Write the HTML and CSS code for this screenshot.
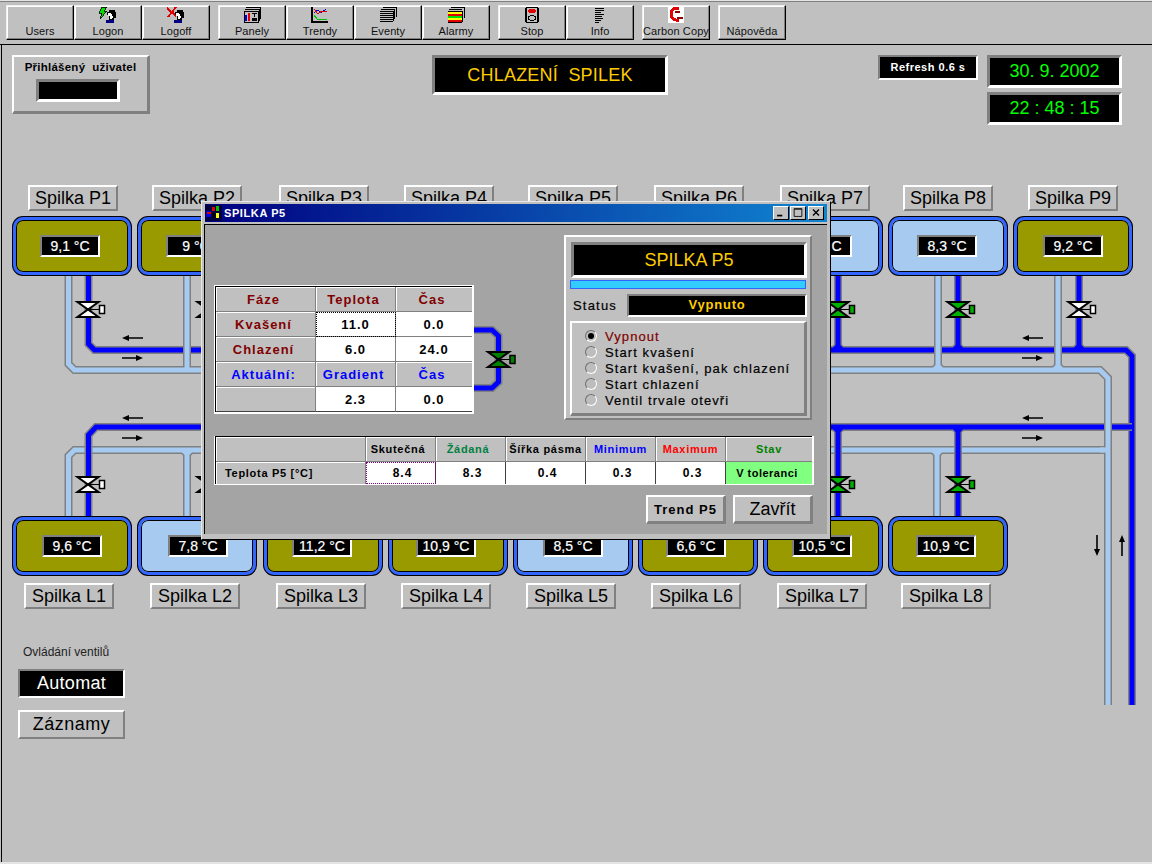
FILE: index.html
```html
<!DOCTYPE html>
<html lang="cs">
<head>
<meta charset="utf-8">
<title>Chlazení spilek</title>
<link rel="stylesheet" href="styles.css">
</head>
<body>
<div class="app">
  <header class="toolbar">
    <div class="tool-group">
      <button class="tool"><span class="tool-icon"></span><span>Users</span></button>
      <button class="tool"><svg class="tool-icon" viewBox="0 0 18 16"><path d="M3 0h5L5 4h3L1 12l2-6H0z" fill="#00e000" stroke="#000" stroke-width=".8"/><path d="M8 5h2V3h6v2h1v6h-2v2H10V8H8z" fill="#000"/><path d="M9 6h3v1h1v2h1v2h-1v1h-2V9H9z" fill="#fff"/><rect x="7" y="13" width="8" height="3" fill="#000080"/></svg><span>Logon</span></button>
      <button class="tool"><svg class="tool-icon" viewBox="0 0 18 16"><path d="M0 1l9 8M9 0L1 10" stroke="#e00000" stroke-width="2" fill="none"/><path d="M8 5h2V3h6v2h1v6h-2v2H10V8H8z" fill="#000"/><path d="M9 6h3v1h1v2h1v2h-1v1h-2V9H9z" fill="#fff"/><rect x="7" y="13" width="8" height="3" fill="#000080"/></svg><span>Logoff</span></button>
    </div>
    <div class="tool-group">
      <button class="tool"><svg class="tool-icon" viewBox="0 0 18 16"><path d="M3 0h14v12M2 2h14v12" fill="none" stroke="#000"/><rect x="1" y="4" width="14" height="11" fill="#c0c0c0" stroke="#000"/><rect x="2" y="8" width="2" height="6" fill="#0000e0"/><rect x="5" y="6" width="2" height="8" fill="#e00000"/><rect x="9" y="6" width="5" height="1" fill="#000"/><rect x="11" y="6" width="1" height="4" fill="#000"/><rect x="9" y="11" width="5" height="3" fill="#000"/></svg><span>Panely</span></button>
      <button class="tool"><svg class="tool-icon" viewBox="0 0 18 16"><path d="M1 0v16M1 15h16" stroke="#000" stroke-width="2" fill="none"/><path d="M3 6l4-3 3 3 5-4" stroke="#0000e0" fill="none"/><path d="M3 2l4 5 4-3 5 1" stroke="#e00000" fill="none"/><path d="M3 8l3 4 4 1 6-1" stroke="#00c000" fill="none"/></svg><span>Trendy</span></button>
      <button class="tool"><svg class="tool-icon" viewBox="0 0 18 16"><path d="M4 0h13v10M2 2h13v10" stroke="#000" fill="none"/><path d="M1 4h13M1 6h13M1 8h13M1 10h13M1 12h13M1 14h13" stroke="#000" fill="none"/><path d="M14 4v10" stroke="#000"/></svg><span>Eventy</span></button>
      <button class="tool"><svg class="tool-icon" viewBox="0 0 18 16"><path d="M4 0h13v11M2 2h13" stroke="#000" fill="none"/><rect x="1" y="4" width="14" height="3" fill="#ffff00"/><rect x="1" y="7" width="14" height="2" fill="#e00000"/><rect x="1" y="9" width="14" height="2" fill="#00e000"/><rect x="1" y="11" width="14" height="2" fill="#ffff00"/><rect x="1" y="13" width="14" height="2" fill="#e00000"/><path d="M1 4h14M1 15h14M15 4v11" stroke="#000" fill="none"/></svg><span>Alarmy</span></button>
    </div>
    <div class="tool-group">
      <button class="tool"><svg class="tool-icon" viewBox="0 0 18 16"><rect x="3" y="0" width="12" height="16" rx="2" fill="#c0c0c0" stroke="#000" stroke-width="1.4"/><ellipse cx="9" cy="4" rx="4" ry="2" fill="#e00000"/><ellipse cx="9" cy="11" rx="3.500" ry="2.500" fill="none" stroke="#000"/></svg><span>Stop</span></button>
      <button class="tool"><svg class="tool-icon" viewBox="0 0 18 16"><path d="M4 1h9M4 3h9M4 5h6M4 7h9M4 9h7M4 11h8M4 13h6M4 15h4" stroke="#000"/></svg><span>Info</span></button>
    </div>
    <div class="tool-group">
      <button class="tool"><svg class="tool-icon" viewBox="0 0 18 16"><rect x="1" width="16" height="16" fill="#fff"/><path d="M12 2C7 0 4 3 4 7s4 7 8 6" stroke="#e00000" stroke-width="3" fill="none"/><path d="M8 6c2-2 4-1 5 0M10 11h6" stroke="#900000" stroke-width="2" fill="none"/></svg><span>Carbon Copy</span></button>
    </div>
    <div class="tool-group">
      <button class="tool"><span class="tool-icon"></span><span>Nápověda</span></button>
    </div>
  </header>

  <main class="canvas">
    <section class="status-row">
      <div class="user-panel raised">
        <div class="user-title">Přihlášený&nbsp; uživatel</div>
        <div class="user-box sunken"></div>
      </div>
      <h1 class="screen-title sunken">CHLAZENÍ&nbsp; SPILEK</h1>
      <div class="refresh sunken">Refresh 0.6 s</div>
      <div class="clock">
        <div class="clock-cell sunken">30. 9. 2002</div>
        <div class="clock-cell sunken">22 : 48 : 15</div>
      </div>
    </section>

    <section class="diagram">
      <svg class="pipes" width="1152" height="530" viewBox="0 180 1152 530" aria-hidden="true">
        <defs>
          <symbol id="valve" overflow="visible" viewBox="-12 -10 30 20" width="30" height="20">
            <path d="M-10.5-7.5H10.5L0 0ZM-10.5 7.5H10.5L0 0Z" fill="currentColor" stroke="#000" stroke-width="2" stroke-linejoin="miter"/>
            <path d="M0 0H11" stroke="#000" stroke-width="1"/>
            <rect x="11.5" y="-4" width="5" height="8" fill="currentColor" stroke="#000" stroke-width="1.5"/>
          </symbol>
          <path id="blue-p" d="M88.5 276V344L94.5 350H1126L1132 356V705M208 276V350M838 276V350M958 276V350M1079 276V350M834 350L838 346L842 350M954 350L958 346L962 350M1075 350L1079 346L1083 350"/>
          <path id="light-l" d="M68.5 516V456L74.5 450H1108M187 450V516M937 450V516M183 450L187 454L191 450M933 450L937 454L941 450"/>
          <path id="blue-l" d="M88.5 516V435L96 427H1132M208 427V516M838 427V516M958 427V516M834 427L838 431L842 427M954 427L958 431L962 427"/>
          <path id="light-p" d="M68.5 276V364L74.5 370H1100L1108 378V705M187 276V370M938 276V370M1058 276V370M934 370L938 366L942 370M1054 370L1058 366L1062 370"/>
        </defs>
        <g fill="none" stroke-linejoin="miter">
          <use href="#blue-p" class="pipe-edge"/><use href="#blue-p" class="pipe-blue"/>
          <use href="#light-l" class="pipe-edge"/><use href="#light-l" class="pipe-light"/>
          <use href="#blue-l" class="pipe-edge"/><use href="#blue-l" class="pipe-blue"/>
          <use href="#light-p" class="pipe-edge"/><use href="#light-p" class="pipe-light"/>
          <path d="M1100 450H1108" class="pipe-light"/>
        </g>
        <g class="arrows">
          <path d="M127 338H143M1027 338H1043M127 418H143M1027 418H1043M122 358H138M1022 358H1038M122 438H138M1022 438H1038M1097 535V551M1122 540V556"/>
          <path class="arrow-head" d="M122 338L129 335V341ZM1022 338L1029 335V341ZM122 418L129 415V421ZM1022 418L1029 415V421ZM143 358L136 355V361ZM1043 358L1036 355V361ZM143 438L136 435V441ZM1043 438L1036 435V441ZM1097 556L1094 549H1100ZM1122 535L1119 542H1125Z"/>
        </g>
        <use href="#valve" x="76" y="299.5" class="v-off"/>
        <use href="#valve" x="196" y="299.5" class="v-off"/>
        <use href="#valve" x="826" y="299.5" class="v-on"/>
        <use href="#valve" x="946" y="299.5" class="v-on"/>
        <use href="#valve" x="1067" y="299.5" class="v-off"/>
        <use href="#valve" x="76" y="474.5" class="v-off"/>
        <use href="#valve" x="196" y="474.5" class="v-off"/>
        <use href="#valve" x="826" y="474.5" class="v-on"/>
        <use href="#valve" x="946" y="474.5" class="v-on"/>
      </svg>

      <div class="label lp1 raised">Spilka P1</div>
      <div class="label lp2 raised">Spilka P2</div>
      <div class="label lp3 raised">Spilka P3</div>
      <div class="label lp4 raised">Spilka P4</div>
      <div class="label lp5 raised">Spilka P5</div>
      <div class="label lp6 raised">Spilka P6</div>
      <div class="label lp7 raised">Spilka P7</div>
      <div class="label lp8 raised">Spilka P8</div>
      <div class="label lp9 raised">Spilka P9</div>

      <div class="tank warm tp1 o28"><div class="temp sunken">9,1 °C</div></div>
      <div class="tank warm tp2 o29"><div class="temp sunken">9 °C</div></div>
      <div class="tank cool tp7 o29"><div class="temp sunken">8,4 °C</div></div>
      <div class="tank cool tp8 o29"><div class="temp sunken">8,3 °C</div></div>
      <div class="tank warm tp9 o30"><div class="temp sunken">9,2 °C</div></div>

      <div class="tank warm tl1 o30"><div class="temp sunken">9,6 °C</div></div>
      <div class="tank cool tl2 o31"><div class="temp sunken">7,8 °C</div></div>
      <div class="tank warm tl3 o29"><div class="temp sunken">11,2 °C</div></div>
      <div class="tank warm tl4 o28"><div class="temp sunken">10,9 °C</div></div>
      <div class="tank cool tl5 o30"><div class="temp sunken">8,5 °C</div></div>
      <div class="tank warm tl6 o28"><div class="temp sunken">6,6 °C</div></div>
      <div class="tank warm tl7 o29"><div class="temp sunken">10,5 °C</div></div>
      <div class="tank warm tl8 o28"><div class="temp sunken">10,9 °C</div></div>

      <div class="label ll1 raised">Spilka L1</div>
      <div class="label ll2 raised">Spilka L2</div>
      <div class="label ll3 raised">Spilka L3</div>
      <div class="label ll4 raised">Spilka L4</div>
      <div class="label ll5 raised">Spilka L5</div>
      <div class="label ll6 raised">Spilka L6</div>
      <div class="label ll7 raised">Spilka L7</div>
      <div class="label ll8 raised">Spilka L8</div>

      <div class="dialog">
        <div class="titlebar">
          <svg class="title-icon" viewBox="0 0 17 16"><rect width="17" height="16" fill="#000040"/><path d="M1 6h5v6H1z" fill="#0000e0"/><path d="M2 7h4v2H2z" fill="#e00000"/><path d="M7 2h3v4H7z" fill="#e00000"/><path d="M11 1h3v5h-3z" fill="#00c000"/><path d="M11 8h3v5h-3z" fill="#ffff00"/><path d="M7 8h3v5H7z" fill="#000"/></svg>
          <span class="title-text">SPILKA P5</span>
          <div class="win-buttons">
            <span class="win-btn"><svg viewBox="0 0 15 14"><rect x="3" y="9" width="6" height="2"/></svg></span>
            <span class="win-btn"><svg viewBox="0 0 15 14"><path d="M3 2.5h9M3 2h9v9H3z" fill="none" stroke="#000"/></svg></span>
            <span class="win-btn btn-close"><svg viewBox="0 0 15 14"><path d="M4 3l7 7M11 3l-7 7" stroke="#000" stroke-width="1.6"/></svg></span>
          </div>
        </div>
        <div class="client">
          <div class="upper">
            <div class="param-table">
              <div class="cell head maroon">Fáze</div><div class="cell head maroon">Teplota</div><div class="cell head maroon">Čas</div>
              <div class="cell head maroon">Kvašení</div><div class="cell value focus-black">11.0</div><div class="cell value">0.0</div>
              <div class="cell head maroon">Chlazení</div><div class="cell value">6.0</div><div class="cell value">24.0</div>
              <div class="cell head blue">Aktuální:</div><div class="cell head blue">Gradient</div><div class="cell head blue">Čas</div>
              <div class="cell head"></div><div class="cell value">2.3</div><div class="cell value">0.0</div>
            </div>
            <svg class="mini-pipe" width="90" height="195" viewBox="474 225 90 195" aria-hidden="true">
              <g fill="none">
                <path class="pipe-edge" d="M474 330H492L498.500 336V382L492 388H474"/>
                <path class="pipe-blue" d="M474 330H492L498.500 336V382L492 388H474"/>
              </g>
              <use href="#valve" x="486.500" y="349.500" class="v-dark"/>
            </svg>
            <div class="control-panel raised">
              <div class="panel-title sunken">SPILKA P5</div>
              <div class="progress"></div>
              <div class="status-line">
                <span class="status-label">Status</span>
                <span class="status-value sunken">Vypnuto</span>
              </div>
              <ul class="mode-list">
                <li class="mode selected"><span class="radio"></span>Vypnout</li>
                <li class="mode"><span class="radio"></span>Start kvašení</li>
                <li class="mode"><span class="radio"></span>Start kvašení, pak chlazení</li>
                <li class="mode"><span class="radio"></span>Start chlazení</li>
                <li class="mode"><span class="radio"></span>Ventil trvale otevři</li>
              </ul>
            </div>
          </div>
          <div class="limits-table">
            <div class="lcell lhead"></div>
            <div class="lcell lhead shift">Skutečná</div>
            <div class="lcell lhead shift c-green">Žádaná</div>
            <div class="lcell lhead">Šířka pásma</div>
            <div class="lcell lhead c-blue">Minimum</div>
            <div class="lcell lhead c-red">Maximum</div>
            <div class="lcell lhead c-dark">Stav</div>
            <div class="lcell lhead row-name">Teplota P5 [°C]</div>
            <div class="lcell lvalue focus-purple">8.4</div>
            <div class="lcell lvalue">8.3</div>
            <div class="lcell lvalue">0.4</div>
            <div class="lcell lvalue">0.3</div>
            <div class="lcell lvalue">0.3</div>
            <div class="lcell lvalue ok">V toleranci</div>
          </div>
          <div class="dialog-actions">
            <button class="action trend raised">Trend P5</button>
            <button class="action close raised">Zavřít</button>
          </div>
        </div>
      </div>
    </section>

    <section class="controls">
      <div class="controls-title">Ovládání ventilů</div>
      <div class="mode-state sunken">Automat</div>
      <button class="records raised">Záznamy</button>
    </section>
  </main>
</div>
</body>
</html>
```

FILE: styles.css
```css
* { box-sizing: border-box; }
html, body { margin: 0; padding: 0; }
body {
  width: 1152px;
  height: 864px;
  overflow: hidden;
  background: #c0c0c0;
  font-family: "Liberation Sans", Arial, sans-serif;
  color: #000;
}
.app {
  width: 1152px;
  height: 864px;
  display: flex;
  flex-direction: column;
  border-top: 1px solid #e4e4e4;
  border-bottom: 2px solid #e4e4e4;
}
.raised {
  border-style: solid;
  border-width: 2px;
  border-color: #fff #808080 #808080 #fff;
  background: #c0c0c0;
}
.sunken {
  border-style: solid;
  border-width: 2px;
  border-color: #808080 #fff #fff #808080;
  background: #000;
}

/* toolbar */
.toolbar {
  height: 43px;
  flex: none;
  display: flex;
  gap: 8px;
  padding: 3px 0 0 6px;
  border-top: 1px solid #808080;
}
.tool-group { display: flex; }
.tool {
  width: 68px;
  height: 35px;
  padding: 1px 0 0;
  margin: 0;
  display: flex;
  flex-direction: column;
  align-items: center;
  font: 11px/13px "Liberation Sans", Arial, sans-serif;
  letter-spacing: .1px;
  color: #111;
  white-space: nowrap;
  background: #c0c0c0;
  border: 1px solid;
  border-color: #efefef #000 #000 #efefef;
  box-shadow: inset -1px -1px 0 #808080, inset 1px 1px 0 #fff;
}
.tool-icon {
  display: block;
  width: 18px;
  height: 16px;
  flex: none;
  margin-bottom: 2px;
  shape-rendering: crispEdges;
}

/* canvas */
.canvas {
  flex: 1;
  min-height: 0;
  border-top: 1px solid #000;
  background: linear-gradient(#000, #000) 1px 0 / 1px 100% no-repeat #c0c0c0;
  padding-top: 10px;
}
.status-row {
  height: 70px;
  display: flex;
  align-items: flex-start;
  margin-bottom: 55px;
  padding-left: 12px;
}
.user-panel {
  width: 138px;
  height: 59px;
  border-width: 2px 3px 3px 2px;
  text-align: center;
}
.user-title {
  font: bold 11.5px/14px "Liberation Sans", Arial, sans-serif;
  padding-top: 3px;
  letter-spacing: .25px;
  white-space: nowrap;
}
.user-box {
  width: 84px;
  height: 23px;
  margin: 5px 0 0 22px;
  border-width: 3px;
}
.screen-title {
  width: 236px;
  height: 40px;
  margin: 0 0 0 282px;
  border-width: 3px;
  color: #ffcc00;
  font: 400 18px/34px "Liberation Sans", Arial, sans-serif;
  letter-spacing: .2px;
  text-align: center;
}
.refresh {
  width: 100px;
  height: 25px;
  margin-left: 210px;
  color: #fff;
  font: bold 11px/21px "Liberation Sans", Arial, sans-serif;
  letter-spacing: .5px;
  text-align: center;
}
.clock { margin-left: 9px; display: flex; flex-direction: column; gap: 4px; }
.clock-cell {
  width: 135px;
  height: 33px;
  border-width: 3px;
  color: #00ff00;
  font: 18px/27px "Liberation Sans", Arial, sans-serif;
  text-align: center;
}

/* diagram */
.diagram { position: relative; height: 430px; }
.pipes { position: absolute; left: 0; top: 0; overflow: visible; }
.pipe-edge { stroke: #808080; stroke-width: 8; fill: none; }
.pipe-blue { stroke: #0000ff; stroke-width: 5; fill: none; }
.pipe-light { stroke: #a6caf0; stroke-width: 5; fill: none; }
.arrows path { stroke: #000; stroke-width: 1.6; fill: none; }
.arrows path.arrow-head { stroke: none; fill: #000; }
.v-off { color: #fff; }
.v-on { color: #00b000; }
.v-dark { color: #008000; }

.label {
  position: absolute;
  width: 90px;
  height: 26px;
  font-size: 18px;
  line-height: 22px;
  text-align: center;
}
.lp1, .lp2, .lp3, .lp4, .lp5, .lp6, .lp7, .lp8, .lp9 { top: 5px; }
.ll1, .ll2, .ll3, .ll4, .ll5, .ll6, .ll7, .ll8 { top: 403px; }
.lp1 { left: 28px; } .lp2 { left: 152px; } .lp3 { left: 279px; } .lp4 { left: 404px; }
.lp5 { left: 528px; } .lp6 { left: 654px; } .lp7 { left: 780px; } .lp8 { left: 903px; } .lp9 { left: 1028px; }
.ll1 { left: 24px; } .ll2 { left: 150px; } .ll3 { left: 276px; } .ll4 { left: 401px; }
.ll5 { left: 526px; } .ll6 { left: 651px; } .ll7 { left: 777px; } .ll8 { left: 901px; }

.tank {
  position: absolute;
  width: 118px;
  height: 58px;
  border: 3px solid #3366ff;
  border-radius: 10px;
  box-shadow: 0 0 0 1px #000, inset 0 0 0 1px #000;
  padding-top: 15px;
}
.warm { background: #999900; }
.cool { background: #a6caf0; }
.tp1, .tp2, .tp7, .tp8, .tp9 { top: 37px; }
.tl1, .tl2, .tl3, .tl4, .tl5, .tl6, .tl7, .tl8 { top: 337px; }
.tp1, .tl1 { left: 13px; }
.tp2, .tl2 { left: 138px; }
.tl3 { left: 264px; }
.tl4 { left: 389px; }
.tl5 { left: 514px; }
.tl6 { left: 639px; }
.tp7, .tl7 { left: 764px; }
.tp8, .tl8 { left: 889px; }
.tp9 { left: 1014px; }
.temp {
  width: 60px;
  height: 22px;
  color: #fff;
  font-size: 14px;
  line-height: 18px;
  text-align: center;
  white-space: nowrap;
  -webkit-text-stroke: .2px #fff;
}
.o28 .temp { margin-left: 24px; }
.o29 .temp { margin-left: 25px; }
.o30 .temp { margin-left: 26px; }
.o31 .temp { margin-left: 27px; }

/* dialog window */
.dialog {
  position: absolute;
  left: 201px;
  top: 21px;
  width: 630px;
  height: 339px;
  padding: 2px 3px 5px 2px;
  background: #c0c0c0;
  border: 1px solid;
  border-color: #e8e8e8 #000 #000 #e8e8e8;
}
.titlebar {
  height: 18px;
  margin-left: 1px;
  display: flex;
  align-items: center;
  background: linear-gradient(90deg, #000080, #1084d0);
}
.title-icon { width: 17px; height: 16px; flex: none; }
.title-text {
  margin-left: 2px;
  color: #fff;
  font: bold 11px/18px "Liberation Sans", Arial, sans-serif;
  letter-spacing: .6px;
}
.win-buttons { margin-left: auto; display: flex; margin-right: 3px; gap: 1px; }
.win-btn {
  width: 16px;
  height: 14px;
  background: #c0c0c0;
  border: 1px solid;
  border-color: #fff #000 #000 #fff;
  display: block;
}
.btn-close { margin-left: 1px; }
.win-btn svg { display: block; width: 14px; height: 12px; }
.client {
  height: 310px;
  margin-top: 2px;
  border-top: 1px solid #000;
  border-left: 1px solid #000;
  background: #a4a4a4;
  padding-left: 9px;
}
.upper { display: flex; align-items: flex-start; height: 195px; }
.param-table {
  flex: none;
  width: 260px;
  height: 129px;
  margin-top: 60px;
  display: grid;
  grid-template-columns: 100px 80px 76px;
  grid-auto-rows: 25px;
  border-style: solid;
  border-width: 1px 2px 2px 1px;
  border-color: #fff;
  background: #000;
  padding: 1px 0 0 1px;
}
.cell {
  display: flex;
  align-items: center;
  justify-content: center;
  font: bold 13px/1 "Liberation Sans", Arial, sans-serif;
  letter-spacing: 1px;
  border-right: 1px solid #808080;
  border-bottom: 1px solid #808080;
  padding-right: 4px;
}
.cell:nth-child(3n) { border-right: 0; }
.cell:nth-last-child(-n+3) { border-bottom-color: #404040; }
.head {
  background: #c0c0c0;
  box-shadow: inset 1px 1px 0 #fff;
}
.value { background: #fff; padding-right: 0; }
.maroon { color: #800000; }
.blue { color: #0000ff; }
.focus-black { outline: 1px dotted #000; outline-offset: -1px; }
.mini-pipe { flex: none; display: block; }

.control-panel {
  flex: none;
  width: 248px;
  height: 185px;
  margin-top: 10px;
  padding: 5px 3px 0 4px;
}
.panel-title {
  height: 36px;
  margin-left: 1px;
  border-width: 3px;
  color: #ffcc00;
  font-size: 18px;
  line-height: 30px;
  text-align: center;
}
.progress {
  height: 9px;
  margin-top: 2px;
  margin-right: 1px;
  background: #33ccff;
  border: 1px solid #3366ff;
}
.status-line {
  display: flex;
  align-items: center;
  height: 23px;
  margin-top: 5px;
}
.status-label {
  padding-left: 3px;
  font-size: 13px;
  letter-spacing: 1.2px;
  -webkit-text-stroke: .2px #000;
}
.status-value {
  margin-left: auto;
  width: 180px;
  height: 23px;
  color: #ffcc00;
  font: bold 13px/18px "Liberation Sans", Arial, sans-serif;
  letter-spacing: .8px;
  text-align: center;
}
.mode-list {
  list-style: none;
  margin: 4px 0 0;
  padding: 5px 0 0 13px;
  height: 95px;
  border-style: solid;
  border-width: 2px 3px 3px 2px;
  border-color: #fff #808080 #808080 #fff;
}
.mode {
  display: flex;
  align-items: center;
  gap: 8px;
  height: 16px;
  font-size: 13px;
  letter-spacing: 1.08px;
  white-space: nowrap;
  -webkit-text-stroke: .2px currentColor;
}
.mode.selected { color: #800000; }
.radio {
  position: relative;
  width: 12px;
  height: 12px;
  flex: none;
  border-radius: 50%;
  border: 1px solid;
  border-color: #707070 #fff #fff #707070;
  background: #bdbdbd;
}
.selected .radio::after {
  content: "";
  position: absolute;
  left: 2px;
  top: 2px;
  width: 6px;
  height: 6px;
  border-radius: 50%;
  background: #000;
}

.limits-table {
  width: 600px;
  height: 49px;
  margin-top: 16px;
  display: grid;
  grid-template-columns: 150px 70px 70px 80px 70px 70px 86px;
  grid-template-rows: 25px 22px;
  border-style: solid;
  border-width: 0 2px 1px 1px;
  border-color: #fff;
  padding: 1px 0 0 1px;
  background: linear-gradient(#000, #000) 0 0 / 100% 1px no-repeat, linear-gradient(#000, #000) 0 0 / 1px 100% no-repeat, #c0c0c0;
}
.lcell {
  display: flex;
  align-items: center;
  justify-content: center;
  font: bold 11px/1 "Liberation Sans", Arial, sans-serif;
  letter-spacing: .7px;
  border-right: 1px solid #808080;
  white-space: nowrap;
}
.lcell:nth-child(7n) { border-right: 0; }
.lhead { background: #c0c0c0; box-shadow: inset 1px 1px 0 #fff; border-bottom: 1px solid #808080; }
.shift { padding-right: 5px; }
.row-name { justify-content: flex-start; padding-left: 9px; border-bottom: 0; }
.lvalue { background: #fff; font-size: 12px; letter-spacing: 1px; border-right-color: #404040; padding-left: 4px; }
.focus-purple { outline: 1px dotted #800080; outline-offset: -1px; }
.ok { background: #80ff80; font-size: 11px; letter-spacing: .5px; padding-left: 0; padding-right: 4px; }
.c-green { color: #008040; }
.c-blue { color: #0000ff; }
.c-red { color: #ff0000; }
.c-dark { color: #008000; }

.dialog-actions {
  width: 599px;
  margin-top: 10px;
  display: flex;
  justify-content: flex-end;
  gap: 7px;
}
.action {
  height: 29px;
  width: 80px;
  padding: 0;
  font-family: "Liberation Sans", Arial, sans-serif;
  color: #000;
  border-width: 2px 3px 3px 2px;
}
.trend { font-size: 13px; font-weight: bold; letter-spacing: 1px; }
.close { font-size: 18px; }

/* bottom controls */
.controls { padding: 35px 0 0 18px; width: 125px; }
.controls-title {
  height: 15px;
  margin-left: 5px;
  font-size: 12px;
  line-height: 15px;
  color: #222;
  white-space: nowrap;
  margin-bottom: 9px;
}
.mode-state {
  width: 107px;
  height: 29px;
  color: #fff;
  font-size: 18px;
  line-height: 25px;
  letter-spacing: .3px;
  text-align: center;
}
.records {
  display: block;
  width: 107px;
  height: 29px;
  margin-top: 12px;
  padding: 0;
  font: 18px "Liberation Sans", Arial, sans-serif;
  letter-spacing: .5px;
  color: #000;
}
```
